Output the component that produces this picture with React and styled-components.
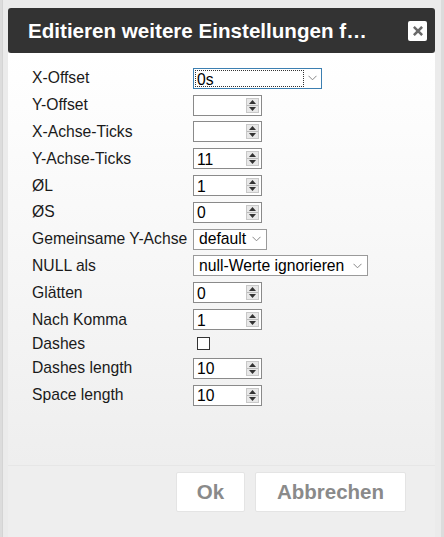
import React from "react";
import styled, { createGlobalStyle } from "styled-components";

const GlobalStyle = createGlobalStyle`
  html, body {
    margin: 0;
    padding: 0;
    background: #dcdcdc;
    font-family: "Liberation Sans", Arial, sans-serif;
  }
`;

const rows = [
  { label: "X-Offset", type: "focusSelect", value: "0s", width: 129 },
  { label: "Y-Offset", type: "number", value: "" },
  { label: "X-Achse-Ticks", type: "number", value: "" },
  { label: "Y-Achse-Ticks", type: "number", value: "11" },
  { label: "ØL", type: "number", value: "1" },
  { label: "ØS", type: "number", value: "0" },
  { label: "Gemeinsame Y-Achse", type: "select", value: "default", width: 74 },
  { label: "NULL als", type: "select", value: "null-Werte ignorieren", width: 175 },
  { label: "Glätten", type: "number", value: "0" },
  { label: "Nach Komma", type: "number", value: "1" },
  { label: "Dashes", type: "checkbox" },
  { label: "Dashes length", type: "number", value: "10" },
  { label: "Space length", type: "number", value: "10" },
];

export default function App() {
  return (
    <>
      <GlobalStyle />
      <Page>
        <Dialog>
          <TitleBar>
            <Title>Editieren weitere Einstellungen f…</Title>
            <CloseButton>
              <svg width="10" height="10" viewBox="0 0 10 10">
                <path
                  d="M1.8 1.8 L8.2 8.2 M8.2 1.8 L1.8 8.2"
                  stroke="#6a6a6a"
                  strokeWidth="2.6"
                  strokeLinecap="square"
                />
              </svg>
            </CloseButton>
          </TitleBar>
          <Content>
            {rows.map((row) => (
              <Row key={row.label} $short={row.type === "checkbox"}>
                <Label>{row.label}</Label>
                {row.type === "number" && <NumberField value={row.value} />}
                {row.type === "select" && (
                  <SelectBox $width={row.width}>
                    <SelectText>{row.value}</SelectText>
                    <Chevron />
                  </SelectBox>
                )}
                {row.type === "focusSelect" && (
                  <SelectBox $width={row.width} $focused>
                    <FocusText>{row.value}</FocusText>
                    <ChevronCell>
                      <Chevron />
                    </ChevronCell>
                  </SelectBox>
                )}
                {row.type === "checkbox" && <CheckBox />}
              </Row>
            ))}
          </Content>
          <ButtonPane>
            <Button $width={69}>Ok</Button>
            <Button $width={151}>Abbrechen</Button>
          </ButtonPane>
        </Dialog>
      </Page>
    </>
  );
}

function NumberField({ value }) {
  return (
    <NumberBox>
      <NumberText>{value}</NumberText>
      <Spinner>
        <SpinHalf>
          <svg width="7" height="4" viewBox="0 0 7 4">
            <path d="M3.5 0 L7 4 L0 4 Z" fill="#333" />
          </svg>
        </SpinHalf>
        <SpinHalf>
          <svg width="7" height="4" viewBox="0 0 7 4">
            <path d="M0 0 L7 0 L3.5 4 Z" fill="#333" />
          </svg>
        </SpinHalf>
      </Spinner>
    </NumberBox>
  );
}

function Chevron() {
  return (
    <svg width="9" height="6" viewBox="0 0 9 6">
      <path d="M0.5 0.8 L4.5 4.8 L8.5 0.8" fill="none" stroke="#888" strokeWidth="1" />
    </svg>
  );
}

const Page = styled.div`
  width: 444px;
  height: 537px;
  overflow: hidden;
  background: #dcdcdc;
`;

const Dialog = styled.div`
  box-sizing: border-box;
  margin-left: 2px;
  width: 439px;
  height: 537px;
  padding: 8px 6px 0 5px;
  background: #ebebeb;
  border-left: 1px solid #d4d4d4;
  display: flex;
  flex-direction: column;
`;

const TitleBar = styled.div`
  height: 45px;
  flex: none;
  background: #333333;
  border-radius: 3px;
  display: flex;
  align-items: center;
  justify-content: space-between;
  padding: 0 8px 0 20px;
`;

const Title = styled.div`
  color: #fff;
  font-weight: bold;
  font-size: 20.6px;
  white-space: nowrap;
  overflow: hidden;
`;

const CloseButton = styled.div`
  width: 19px;
  height: 20px;
  background: #fff;
  border-radius: 2px;
  display: flex;
  align-items: center;
  justify-content: center;
`;

const Content = styled.div`
  flex: 1;
  padding: 12px 0 0 24px;
  background: linear-gradient(#ffffff 0%, #f6f6f6 55%, #eeeeee 100%);
`;

const Row = styled.div`
  display: flex;
  align-items: center;
  height: ${(p) => (p.$short ? "22px" : "26.8px")};
`;

const Label = styled.div`
  width: 161px;
  flex: none;
  font-size: 15.7px;
  color: #1a1a1a;
  white-space: nowrap;
`;

const NumberBox = styled.div`
  box-sizing: border-box;
  width: 69px;
  height: 21px;
  border: 1px solid #8a8a8a;
  background: #fff;
  display: flex;
  align-items: center;
  padding: 0 2px 0 3px;
`;

const NumberText = styled.div`
  flex: 1;
  font-size: 15.7px;
  color: #000;
  line-height: 19px;
  padding-top: 1px;
`;

const Spinner = styled.div`
  width: 13px;
  height: 15px;
  display: flex;
  flex-direction: column;
  border: 1px solid #c8c8c8;
  box-sizing: border-box;
  background: #e8e8e8;
`;

const SpinHalf = styled.div`
  flex: 1;
  display: flex;
  align-items: center;
  justify-content: center;
  &:first-child {
    border-bottom: 1px solid #bbb;
  }
`;

const SelectBox = styled.div`
  box-sizing: border-box;
  width: ${(p) => p.$width}px;
  height: 21px;
  border: 1px solid ${(p) => (p.$focused ? "#3c7fb1" : "#9a9a9a")};
  background: #fff;
  display: flex;
  align-items: center;
  gap: ${(p) => (p.$focused ? "0" : "5px")};
  padding: ${(p) => (p.$focused ? "1px" : "0 5px 0 5px")};
`;

const SelectText = styled.div`
  flex: 1;
  font-size: 15.7px;
  color: #000;
  white-space: nowrap;
`;

const FocusText = styled.div`
  flex: 1;
  height: 100%;
  box-sizing: border-box;
  border: 1px dotted #333;
  font-size: 15.7px;
  line-height: 17px;
  padding-left: 1px;
  color: #000;
`;

const ChevronCell = styled.div`
  width: 16px;
  height: 100%;
  display: flex;
  align-items: center;
  justify-content: center;
`;

const CheckBox = styled.div`
  box-sizing: border-box;
  width: 13px;
  height: 13px;
  margin-left: 4px;
  border: 1px solid #333;
  background: #fff;
`;

const ButtonPane = styled.div`
  height: 72px;
  flex: none;
  box-sizing: border-box;
  border-top: 1px solid #e6e6e6;
  background: #eeeeee;
  display: flex;
  justify-content: flex-end;
  align-items: flex-start;
  gap: 10px;
  padding: 6px 29px 0 0;
`;

const Button = styled.div`
  box-sizing: border-box;
  width: ${(p) => p.$width}px;
  height: 40px;
  background: #fff;
  border: 1px solid #e4e4e4;
  border-radius: 2px;
  color: #8a8a8a;
  font-weight: bold;
  font-size: 20.5px;
  display: flex;
  align-items: center;
  justify-content: center;
`;
